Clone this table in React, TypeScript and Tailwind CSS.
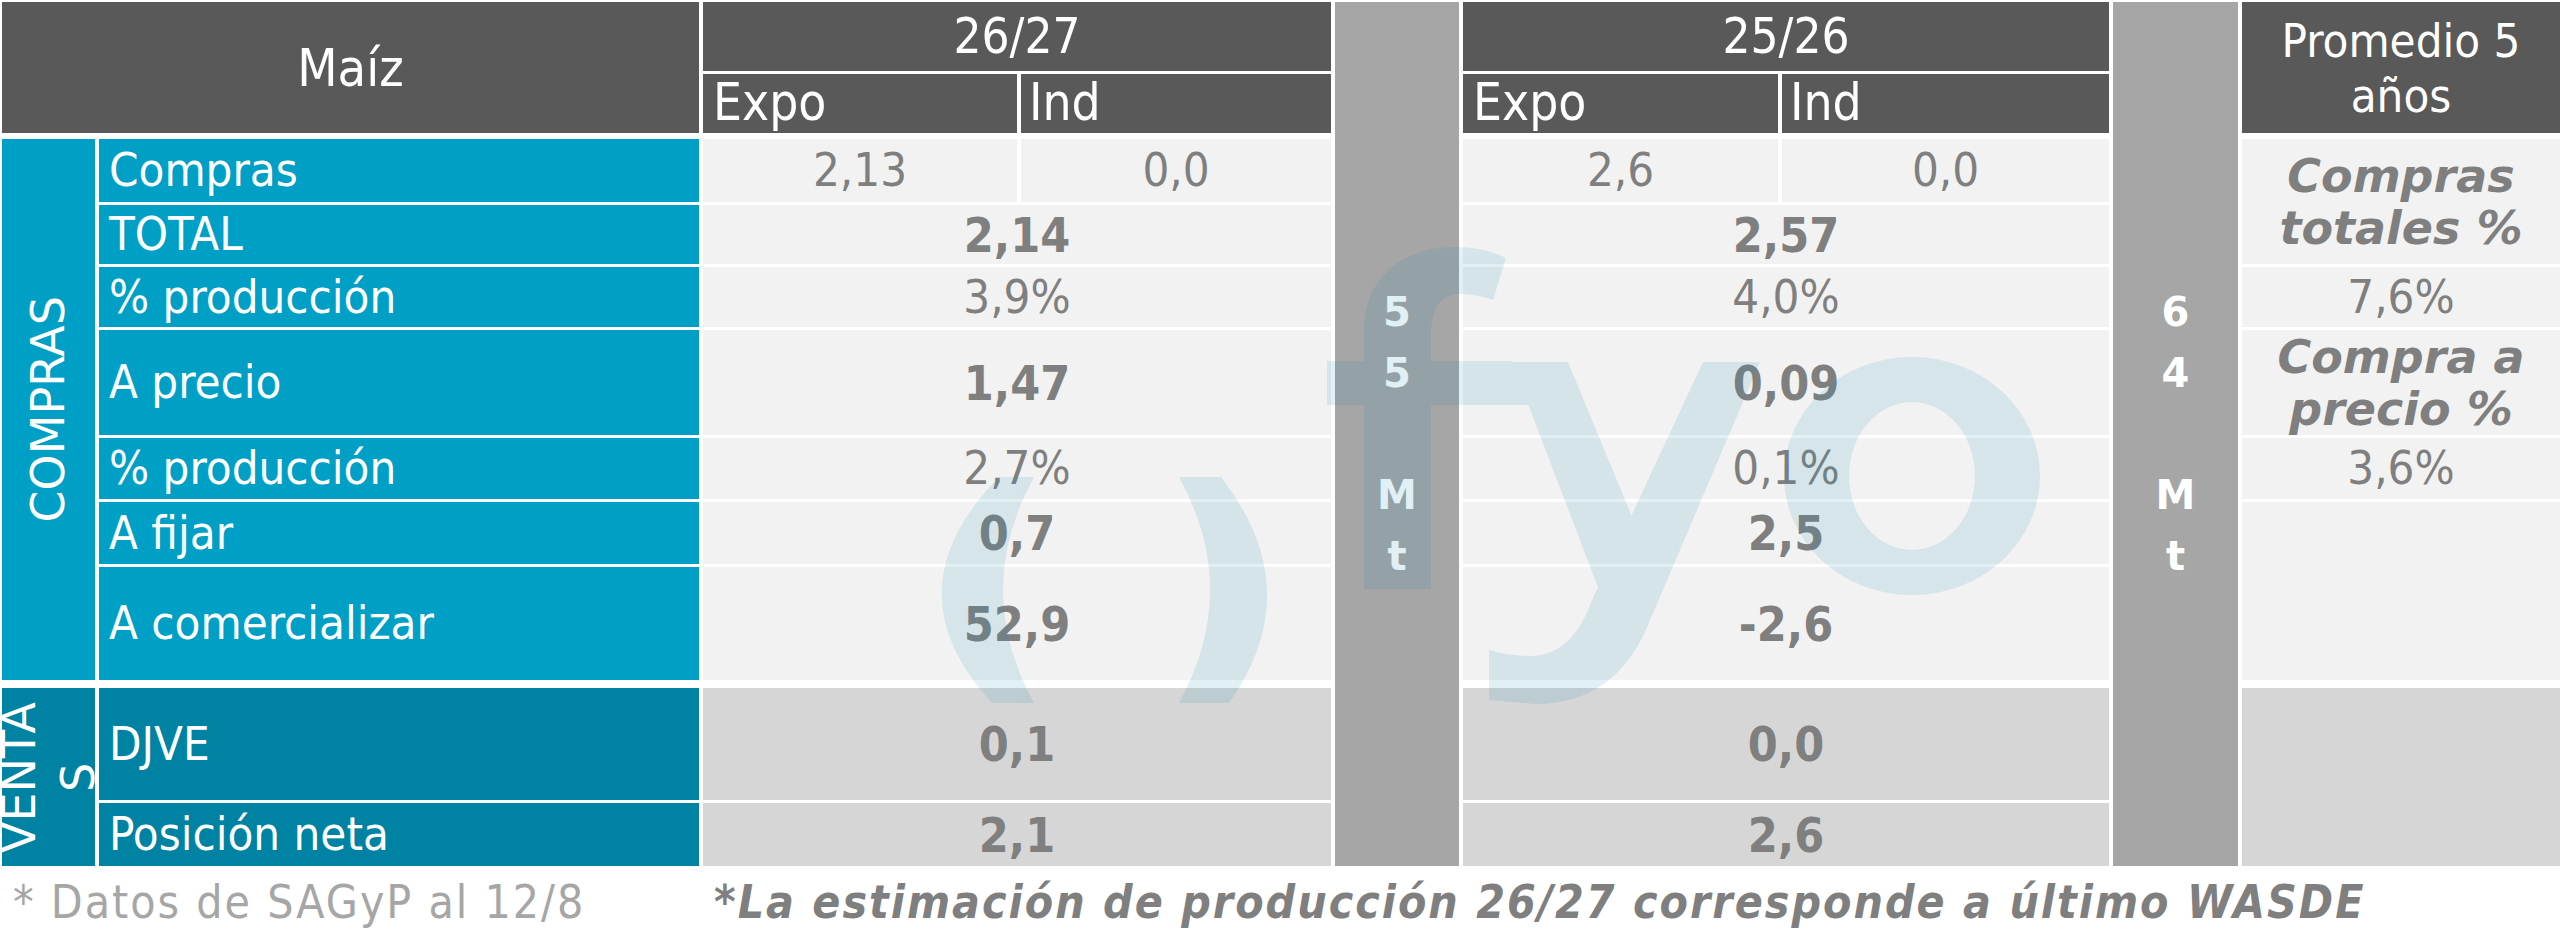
import React from "react";

const cond = "font-['DejaVu_Sans_Condensed','DejaVu_Sans',sans-serif] [font-stretch:condensed]";
const wide = "font-['DejaVu_Sans',Verdana,sans-serif]";

function Head({ className, children }: { className: string; children: React.ReactNode }) {
  return (
    <div className={`flex items-center bg-[#595959] text-white ${cond} ${className}`}>
      {children}
    </div>
  );
}

function Label({ className, children }: { className: string; children: React.ReactNode }) {
  return (
    <div className={`flex items-center pl-[10px] text-[47px] text-white ${cond} ${className}`}>
      {children}
    </div>
  );
}

function Val({
  className,
  bold,
  children,
}: {
  className: string;
  bold?: boolean;
  children?: React.ReactNode;
}) {
  return (
    <div
      className={`flex items-center justify-center text-[#7f7f7f] ${cond} ${
        bold ? "text-[48px] font-bold" : "text-[47px]"
      } ${className}`}
    >
      {children}
    </div>
  );
}

function Watermark() {
  return (
    <svg
      className="pointer-events-none absolute left-0 top-0"
      width="2560"
      height="933"
      viewBox="0 0 2560 933"
    >
      <g fill="#1f8fb5" opacity="0.13">
        <path d="M999 477 Q888 590 992 703 L1034 703 Q972 590 1034 477 Z" />
        <path d="M1179 477 Q1241 590 1179 703 L1229 703 Q1309 590 1221 477 Z" />
        <path d="M1364 589 L1364 330 C1364 280 1400 247 1455 247 C1475 247 1492 251 1506 258 L1493 300 C1482 296 1470 294 1460 294 C1440 294 1431 310 1431 335 L1431 589 Z" />
        <path d="M1327 361 H1364 V405 H1327 Z M1431 361 H1512 L1530 405 H1431 Z" />
        <path d="M1512 362 L1568 362 L1652 565 L1615 632 Z" />
        <path d="M1703 362 L1760 362 L1648 625 Q1615 704 1535 704 L1489 700 L1489 650 Q1510 656 1530 656 Q1572 656 1592 600 Z" />
        <path
          fillRule="evenodd"
          d="M1784 476 a128 119 0 1 0 256 0 a128 119 0 1 0 -256 0 Z M1849 476 a63 74 0 1 0 126 0 a63 74 0 1 0 -126 0 Z"
        />
      </g>
    </svg>
  );
}

export default function App() {
  const teal = "bg-[#00a0c6]";
  const tealDark = "bg-[#0082a2]";
  const light = "bg-[#f2f2f2]";
  const ventas = "bg-[#d6d6d6]";

  return (
    <div className="relative h-[933px] w-[2560px] overflow-hidden bg-white">
      <div className="grid grid-cols-[93px_600px_314px_310px_124px_315px_327px_125px_318px] grid-rows-[69px_59px_0px_63px_59px_60px_105px_61px_62px_113px_2px_112px_63px] gap-x-[4px] gap-y-[3px] pl-[2px] pt-[2px]">
        {/* header */}
        <Head className="col-start-1 col-span-2 row-start-1 row-span-2 justify-center text-[52px]">
          Maíz
        </Head>
        <Head className="col-start-3 col-span-2 row-start-1 justify-center text-[49px]">26/27</Head>
        <Head className="col-start-3 row-start-2 pl-[10px] text-[51px]">Expo</Head>
        <Head className="col-start-4 row-start-2 pl-[8px] text-[51px]">Ind</Head>
        <Head className="col-start-6 col-span-2 row-start-1 justify-center text-[49px]">25/26</Head>
        <Head className="col-start-6 row-start-2 pl-[10px] text-[51px]">Expo</Head>
        <Head className="col-start-7 row-start-2 pl-[8px] text-[51px]">Ind</Head>
        <Head className="col-start-9 row-start-1 row-span-2 justify-center text-center text-[47px] leading-[55px]">
          <span>
            Promedio 5
            <br />
            años
          </span>
        </Head>

        {/* Mt columns */}
        <div className="col-start-5 row-start-1 row-span-13 flex items-center justify-center bg-[#a6a6a6]">
          <div className={`text-center text-[40px] font-bold leading-[61px] text-white ${wide}`}>
            5<br />5<br />
            <br />M<br />t
          </div>
        </div>
        <div className="col-start-8 row-start-1 row-span-13 flex items-center justify-center bg-[#a6a6a6]">
          <div className={`text-center text-[40px] font-bold leading-[61px] text-white ${wide}`}>
            6<br />4<br />
            <br />M<br />t
          </div>
        </div>

        {/* side labels */}
        <div className={`col-start-1 row-start-4 row-span-7 flex items-center justify-center ${teal}`}>
          <span className={`rotate-180 text-[46px] leading-[59px] text-white [writing-mode:vertical-rl] ${wide}`}>
            COMPRAS
          </span>
        </div>
        <div className={`col-start-1 row-start-12 row-span-2 flex items-center justify-center ${tealDark}`}>
          <span className={`rotate-180 text-center text-[46px] leading-[59px] text-white [writing-mode:vertical-rl] ${wide}`}>
            VENTA
            <br />S
          </span>
        </div>

        {/* row labels */}
        <Label className={`col-start-2 row-start-4 ${teal}`}>Compras</Label>
        <Label className={`col-start-2 row-start-5 ${teal}`}>TOTAL</Label>
        <Label className={`col-start-2 row-start-6 ${teal}`}>% producción</Label>
        <Label className={`col-start-2 row-start-7 ${teal}`}>A precio</Label>
        <Label className={`col-start-2 row-start-8 ${teal}`}>% producción</Label>
        <Label className={`col-start-2 row-start-9 ${teal}`}>A fijar</Label>
        <Label className={`col-start-2 row-start-10 ${teal}`}>A comercializar</Label>
        <Label className={`col-start-2 row-start-12 ${tealDark}`}>DJVE</Label>
        <Label className={`col-start-2 row-start-13 ${tealDark}`}>Posición neta</Label>

        {/* 26/27 */}
        <Val className={`col-start-3 row-start-4 ${light}`}>2,13</Val>
        <Val className={`col-start-4 row-start-4 ${light}`}>0,0</Val>
        <Val bold className={`col-start-3 col-span-2 row-start-5 ${light}`}>2,14</Val>
        <Val className={`col-start-3 col-span-2 row-start-6 ${light}`}>3,9%</Val>
        <Val bold className={`col-start-3 col-span-2 row-start-7 ${light}`}>1,47</Val>
        <Val className={`col-start-3 col-span-2 row-start-8 ${light}`}>2,7%</Val>
        <Val bold className={`col-start-3 col-span-2 row-start-9 ${light}`}>0,7</Val>
        <Val bold className={`col-start-3 col-span-2 row-start-10 ${light}`}>52,9</Val>
        <Val bold className={`col-start-3 col-span-2 row-start-12 ${ventas}`}>0,1</Val>
        <Val bold className={`col-start-3 col-span-2 row-start-13 ${ventas}`}>2,1</Val>

        {/* 25/26 */}
        <Val className={`col-start-6 row-start-4 ${light}`}>2,6</Val>
        <Val className={`col-start-7 row-start-4 ${light}`}>0,0</Val>
        <Val bold className={`col-start-6 col-span-2 row-start-5 ${light}`}>2,57</Val>
        <Val className={`col-start-6 col-span-2 row-start-6 ${light}`}>4,0%</Val>
        <Val bold className={`col-start-6 col-span-2 row-start-7 ${light}`}>0,09</Val>
        <Val className={`col-start-6 col-span-2 row-start-8 ${light}`}>0,1%</Val>
        <Val bold className={`col-start-6 col-span-2 row-start-9 ${light}`}>2,5</Val>
        <Val bold className={`col-start-6 col-span-2 row-start-10 ${light}`}>-2,6</Val>
        <Val bold className={`col-start-6 col-span-2 row-start-12 ${ventas}`}>0,0</Val>
        <Val bold className={`col-start-6 col-span-2 row-start-13 ${ventas}`}>2,6</Val>

        {/* promedio */}
        <div
          className={`col-start-9 row-start-4 row-span-2 flex items-center justify-center text-center text-[46px] font-bold italic leading-[52px] text-[#7f7f7f] ${wide} ${light}`}
        >
          <span>
            Compras
            <br />
            totales %
          </span>
        </div>
        <Val className={`col-start-9 row-start-6 ${light}`}>7,6%</Val>
        <div
          className={`col-start-9 row-start-7 flex items-center justify-center text-center text-[46px] font-bold italic leading-[52px] text-[#7f7f7f] ${wide} ${light}`}
        >
          <span>
            Compra a
            <br />
            precio %
          </span>
        </div>
        <Val className={`col-start-9 row-start-8 ${light}`}>3,6%</Val>
        <div className={`col-start-9 row-start-9 row-span-2 ${light}`} />
        <div className={`col-start-9 row-start-12 row-span-2 ${ventas}`} />
      </div>

      {/* footer */}
      <div className={`flex h-[67px] items-center pl-[13px] pt-[6px] text-[46px] tracking-[2px] ${cond}`}>
        <span className="w-[701px] shrink-0 text-[#a6a6a6]">* Datos de SAGyP al 12/8</span>
        <span className="font-bold italic text-[#7f7f7f]">
          *La estimación de producción 26/27 corresponde a último WASDE
        </span>
      </div>

      <Watermark />
    </div>
  );
}
